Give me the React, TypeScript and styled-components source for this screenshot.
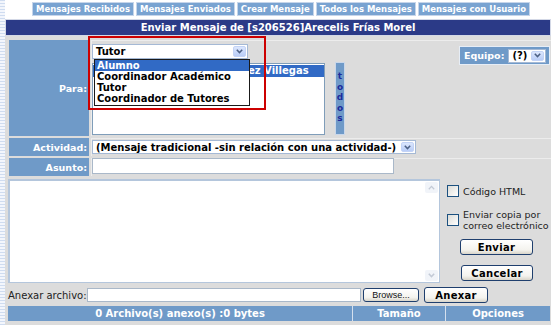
import React from "react";
import styled, { createGlobalStyle } from "styled-components";

const FONT = `"DejaVu Sans", Verdana, sans-serif`;

const GlobalStyle = createGlobalStyle`
  html, body { margin: 0; padding: 0; }
  body {
    width: 556px;
    height: 325px;
    overflow: hidden;
    font-family: ${FONT};
    background:
      repeating-linear-gradient(to bottom, #cfdcf0 0 1px, #f3f6fc 1px 3px) left top / 5px 100% no-repeat,
      #ffffff;
  }
`;

const Page = styled.div`
  width: 546px;
  margin-left: 5px;
`;

const TabBar = styled.div`
  display: flex;
  gap: 2px;
  padding: 2px 0 0 27px;
`;

const Tab = styled.div`
  box-sizing: border-box;
  height: 14px;
  padding: 0 3px;
  border: 1px solid #c6d5ea;
  background: #79a3d1;
  color: #fff;
  font: bold 8.5px/12px ${FONT};
  white-space: nowrap;
`;

const TitleBar = styled.div`
  box-sizing: border-box;
  margin-top: 3px;
  height: 17px;
  background: #2b3a87;
  border: 1px solid #d3d8e6;
  color: #fff;
  font: bold 10px/15px ${FONT};
  text-align: center;
  white-space: nowrap;
`;

const Panel = styled.div`
  position: relative;
  height: 289px;
  background: #dcdcdc;
  overflow: hidden;
`;

const FormGrid = styled.div`
  display: grid;
  grid-template-columns: 80px 1fr;
  grid-template-rows: 96px 18px 18px;
  gap: 2px;
  padding: 4px 0 0 4px;
`;

const LabelCell = styled.div`
  background: #6f9ac8;
  color: #fff;
  font: bold 9.5px ${FONT};
  display: flex;
  align-items: center;
  justify-content: flex-end;
  padding-right: 2px;
`;

const ContentCell = styled.div<{ $align?: string }>`
  position: relative;
  display: flex;
  align-items: ${(p) => p.$align || "center"};
  box-shadow: inset 1px 1px 0 #ececec;
  padding-left: 1px;
`;

const ParaCell = styled(ContentCell)`
  justify-content: space-between;
  padding: 4px 1px 0 1px;
`;

const ParaLeft = styled.div`
  display: flex;
  flex-direction: column;
  gap: 4px;
`;

const ListRow = styled.div`
  display: flex;
  gap: 10px;
  align-items: flex-start;
`;

const SelectBox = styled.div<{ $w: number; $h: number }>`
  box-sizing: border-box;
  width: ${(p) => p.$w}px;
  height: ${(p) => p.$h}px;
  display: flex;
  background: #fff;
  border: 1px solid #a5b9d5;
`;

const SelectText = styled.span`
  flex: 1;
  display: flex;
  align-items: center;
  padding-left: 3px;
  font: bold 10px ${FONT};
  color: #000;
  white-space: nowrap;
  overflow: hidden;
`;

const ArrowBtn = styled.span`
  box-sizing: border-box;
  width: 13px;
  margin: 1px;
  border-radius: 2px;
  background: linear-gradient(#dbe6fd, #b9cdf7);
  border: 1px solid #c3d3f6;
  display: flex;
  align-items: center;
  justify-content: center;
`;

const ListBox = styled.div`
  box-sizing: border-box;
  width: 233px;
  height: 72px;
  background: #fff;
  border: 1px solid #7f9db9;
  padding-top: 1px;
`;

const ListItem = styled.div<{ $sel?: boolean }>`
  height: 12px;
  padding-left: 2px;
  font: bold 10px/12px ${FONT};
  white-space: nowrap;
  overflow: hidden;
  background: ${(p) => (p.$sel ? "#316ac5" : "transparent")};
  color: ${(p) => (p.$sel ? "#fff" : "#000")};
`;

const Todos = styled.div`
  box-sizing: border-box;
  width: 10px;
  height: 73px;
  margin-top: -1px;
  background: #6f9ac8;
  border: 1px solid #c9d7ea;
  display: flex;
  flex-direction: column;
  align-items: center;
  padding-top: 8px;
  color: #1c2a9c;
  font: bold 9px/10.5px ${FONT};
`;

const EquipoBox = styled.div`
  box-sizing: border-box;
  margin-top: 2px;
  height: 19px;
  width: 91px;
  display: flex;
  align-items: center;
  gap: 4px;
  padding: 0 3px 0 4px;
  background: #6f9ac8;
  border: 1px solid #e6edf6;
  color: #fff;
  font: bold 9.5px ${FONT};
`;

const Dropdown = styled.div`
  position: absolute;
  left: 3px;
  top: 19px;
  box-sizing: border-box;
  width: 156px;
  padding-bottom: 1px;
  background: #fff;
  border: 1px solid #1a1a1a;
`;

const DropItem = styled.div<{ $sel?: boolean }>`
  height: 11px;
  padding-left: 2px;
  font: bold 10px/11px ${FONT};
  white-space: nowrap;
  background: ${(p) => (p.$sel ? "#316ac5" : "transparent")};
  color: ${(p) => (p.$sel ? "#fff" : "#000")};
`;

const RedFrame = styled.div`
  position: absolute;
  left: 83px;
  top: 0;
  width: 178px;
  height: 74px;
  box-sizing: border-box;
  border: 2px solid #cc0000;
  pointer-events: none;
`;

const TextInput = styled.div<{ $w: number; $h: number }>`
  box-sizing: border-box;
  width: ${(p) => p.$w}px;
  height: ${(p) => p.$h}px;
  background: #fff;
  border: 1px solid #a9b8c9;
`;

const Lower = styled.div`
  display: flex;
  margin-top: 3px;
  padding-left: 3px;
`;

const TextArea = styled.div`
  box-sizing: border-box;
  width: 432px;
  height: 104px;
  background: #fff;
  border: 1px solid #b4c6dc;
  border-left-width: 2px;
  border-top-width: 2px;
  display: flex;
  justify-content: flex-end;
`;

const ScrollTrack = styled.div`
  width: 13px;
  margin-right: 1px;
  display: flex;
  flex-direction: column;
  justify-content: space-between;
  padding: 1px 0;
`;

const ScrollArrow = styled.div`
  height: 11px;
  border-radius: 2px;
  background: #f1f4f9;
  display: flex;
  align-items: center;
  justify-content: center;
`;

const Side = styled.div`
  margin-left: 7px;
  width: 104px;
  padding-top: 6px;
  display: flex;
  flex-direction: column;
`;

const CheckRow = styled.div<{ $mt?: number }>`
  display: flex;
  align-items: center;
  gap: 4px;
  margin-top: ${(p) => p.$mt || 0}px;
  font: 9.5px/11px ${FONT};
  color: #222;
`;

const CheckBox = styled.span`
  box-sizing: border-box;
  flex: none;
  width: 12px;
  height: 12px;
  border: 1px solid #1c5180;
  background: linear-gradient(135deg, #dcdcd7, #ffffff);
`;

const XPButton = styled.div<{ $w: number; $h: number; $mt?: number; $ml?: number }>`
  box-sizing: border-box;
  width: ${(p) => p.$w}px;
  height: ${(p) => p.$h}px;
  margin-top: ${(p) => p.$mt || 0}px;
  margin-left: ${(p) => p.$ml || 0}px;
  border: 1px solid #1f3f6e;
  border-radius: 3px;
  background: linear-gradient(#ffffff, #f4f3ee 70%, #d9d5ca);
  display: flex;
  align-items: center;
  justify-content: center;
  font: bold 10px ${FONT};
  color: #000;
  letter-spacing: 0.3px;
`;

const BrowseButton = styled(XPButton)`
  font: 9px "Liberation Sans", Arial, sans-serif;
  letter-spacing: 0;
  border-radius: 3px;
  color: #111;
`;

const AttachRow = styled.div`
  display: flex;
  align-items: center;
  height: 16px;
  margin-top: 4px;
  padding-left: 3px;
`;

const AttachLabel = styled.span`
  font: 10px ${FONT};
  color: #222;
  width: 79px;
  white-space: nowrap;
`;

const FooterBar = styled.div`
  display: grid;
  grid-template-columns: 344px 92px 104px;
  gap: 1px;
  margin: 3px 0 0 3px;
  width: 542px;
  background: #d5e0ee;
  height: 15px;
`;

const FooterCell = styled.div`
  background: #6f9ac8;
  color: #fff;
  font: bold 10px/15px ${FONT};
  text-align: center;
  white-space: nowrap;
`;

const Chevron = ({ color = "#4d6185" }: { color?: string }) => (
  <svg width="7" height="5" viewBox="0 0 7 5">
    <path d="M0.8 0.8 L3.5 3.6 L6.2 0.8" fill="none" stroke={color} strokeWidth="1.5" />
  </svg>
);

const Select = ({ w, h, text }: { w: number; h: number; text: string }) => (
  <SelectBox $w={w} $h={h}>
    <SelectText>{text}</SelectText>
    <ArrowBtn>
      <Chevron />
    </ArrowBtn>
  </SelectBox>
);

const tabs = [
  "Mensajes Recibidos",
  "Mensajes Enviados",
  "Crear Mensaje",
  "Todos los Mensajes",
  "Mensajes con Usuario",
];

const options = ["Alumno", "Coordinador Académico", "Tutor", "Coordinador de Tutores"];

export default function App() {
  return (
    <>
      <GlobalStyle />
      <Page>
        <TabBar>
          {tabs.map((t) => (
            <Tab key={t}>{t}</Tab>
          ))}
        </TabBar>
        <TitleBar>Enviar Mensaje de [s206526]Arecelis Frías Morel</TitleBar>
        <Panel>
          <FormGrid>
            <LabelCell>Para:</LabelCell>
            <ParaCell $align="flex-start">
              <ParaLeft>
                <Select w={156} h={15} text="Tutor" />
                <ListRow>
                  <ListBox>
                    <ListItem $sel>[s201534]Laura María Gómez Villegas</ListItem>
                  </ListBox>
                  <Todos>
                    <span>t</span>
                    <span>o</span>
                    <span>d</span>
                    <span>o</span>
                    <span>s</span>
                  </Todos>
                </ListRow>
              </ParaLeft>
              <EquipoBox>
                Equipo:
                <Select w={38} h={14} text="(?)" />
              </EquipoBox>
              <Dropdown>
                {options.map((o, i) => (
                  <DropItem key={o} $sel={i === 0}>
                    {o}
                  </DropItem>
                ))}
              </Dropdown>
            </ParaCell>

            <LabelCell>Actividad:</LabelCell>
            <ContentCell>
              <Select w={324} h={14} text="(Mensaje tradicional -sin relación con una actividad-)" />
            </ContentCell>

            <LabelCell>Asunto:</LabelCell>
            <ContentCell $align="flex-start">
              <TextInput $w={302} $h={16} />
            </ContentCell>
          </FormGrid>

          <Lower>
            <TextArea>
              <ScrollTrack>
                <ScrollArrow>
                  <svg width="7" height="5" viewBox="0 0 7 5">
                    <path d="M0.8 4.2 L3.5 1.4 L6.2 4.2" fill="none" stroke="#c3cad6" strokeWidth="1.3" />
                  </svg>
                </ScrollArrow>
                <ScrollArrow>
                  <Chevron color="#c3cad6" />
                </ScrollArrow>
              </ScrollTrack>
            </TextArea>
            <Side>
              <CheckRow>
                <CheckBox />
                <span>Código HTML</span>
              </CheckRow>
              <CheckRow $mt={12}>
                <CheckBox />
                <span>
                  Enviar copia por
                  <br />
                  correo electrónico
                </span>
              </CheckRow>
              <XPButton $w={73} $h={16} $mt={8} $ml={13}>
                Enviar
              </XPButton>
              <XPButton $w={72} $h={16} $mt={10} $ml={14}>
                Cancelar
              </XPButton>
            </Side>
          </Lower>

          <AttachRow>
            <AttachLabel>Anexar archivo:</AttachLabel>
            <TextInput $w={274} $h={14} />
            <BrowseButton $w={56} $h={14} $ml={2}>
              Browse...
            </BrowseButton>
            <XPButton $w={64} $h={16} $ml={5}>
              Anexar
            </XPButton>
          </AttachRow>

          <FooterBar>
            <FooterCell>0 Archivo(s) anexo(s) :0 bytes</FooterCell>
            <FooterCell>Tamaño</FooterCell>
            <FooterCell>Opciones</FooterCell>
          </FooterBar>

          <RedFrame />
        </Panel>
      </Page>
    </>
  );
}
